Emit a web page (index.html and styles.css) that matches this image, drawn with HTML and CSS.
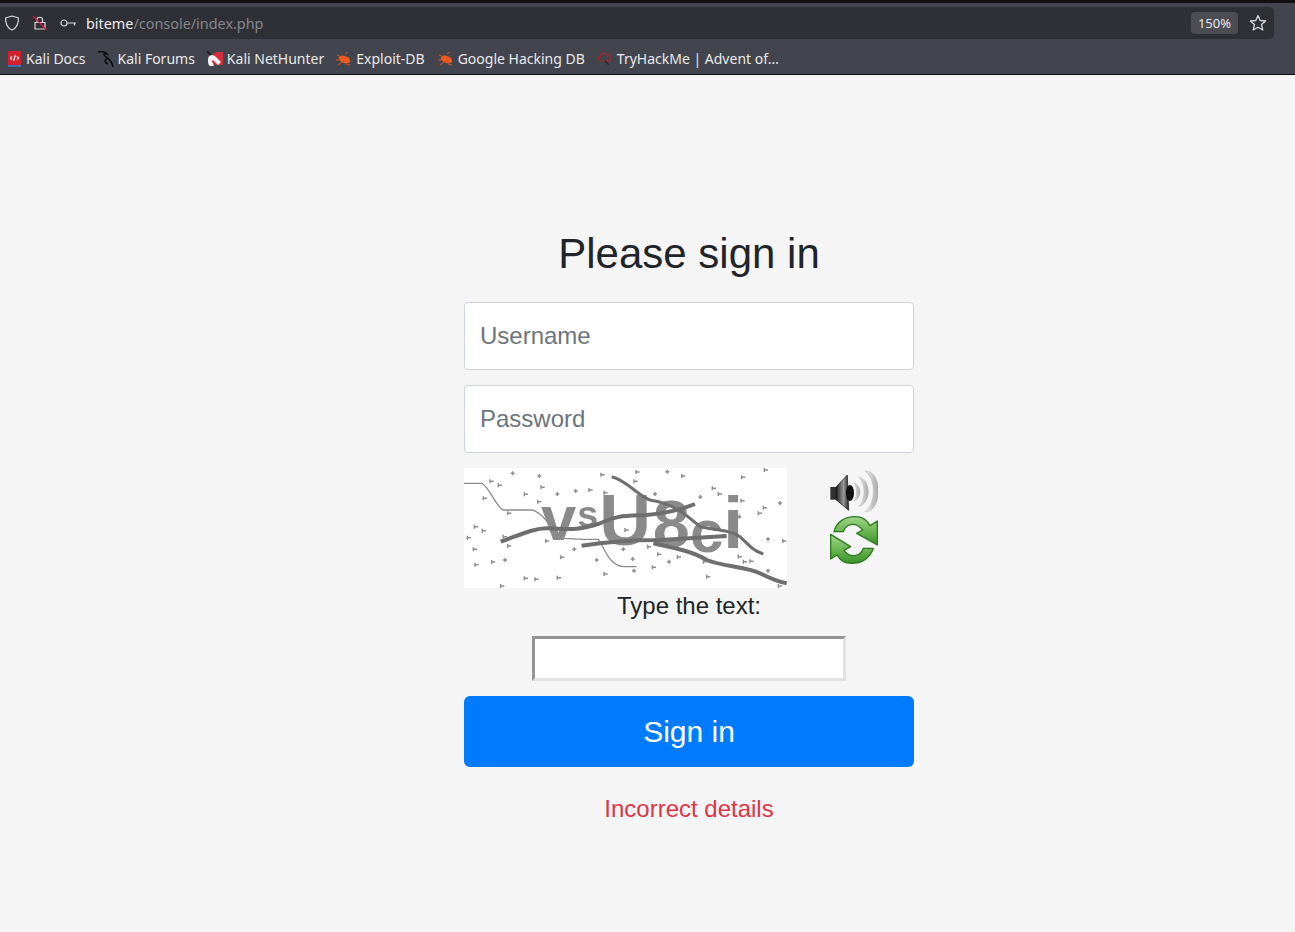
FILE: index.html
```html
<!DOCTYPE html>
<html lang="en">

<head>
    <meta charset="UTF-8">
    <meta name="viewport" content="width=device-width, initial-scale=1.0">
    <title>Sign in</title>
    <link rel="stylesheet" href="styles.css">
</head>

<body>
    <div class="browser">
        <div class="url-bar">
            <svg class="ui-icon" width="16" height="16" viewBox="0 0 16 16"><path d="M8 1 L14.5 3 C14.5 9 13 13 8 15 C3 13 1.500 9 1.500 3 Z" fill="none" stroke="#d8d8da" stroke-width="1.200" stroke-linejoin="round"/></svg>
            <svg class="ui-icon" width="16" height="16" viewBox="0 0 16 16"><path d="M5 7 V4.500 C5 1.500 10.500 1.500 10.500 4.500 V7 M3 7.500 H13 V14 H3 Z" fill="none" stroke="#d8d8da" stroke-width="1.200"/><path d="M1.500 1.500 L14.500 15" stroke="#e0174f" stroke-width="1.300"/></svg>
            <svg class="ui-icon" width="17" height="16" viewBox="0 0 17 16"><circle cx="4" cy="8" r="3" fill="none" stroke="#d8d8da" stroke-width="1.200"/><path d="M7 8 H16 M14.500 8 V10.500" fill="none" stroke="#d8d8da" stroke-width="1.200"/></svg>
            <div class="url"><span class="host">biteme</span>/console/index.php</div>
            <div class="zoom-level">150%</div>
            <svg class="star" width="18" height="18" viewBox="0 0 18 18"><path d="M9 1.500 L11.200 6.500 L16.700 7 L12.500 10.600 L13.800 16 L9 13.200 L4.200 16 L5.500 10.600 L1.300 7 L6.800 6.500 Z" fill="none" stroke="#d8d8da" stroke-width="1.300" stroke-linejoin="round"/></svg>
        </div>
        <div class="bookmarks">
            <div class="bookmark">
                <svg viewBox="0 0 16 16"><rect x="2" y="0" width="13" height="14" fill="#d3202a"/><rect x="2" y="14" width="13" height="2" fill="#3f6fb5"/><path d="M6 5 L4.500 7 L6 9 M11 5 L12.500 7 L11 9 M9.500 4 L7.500 10" fill="none" stroke="#fff" stroke-width="1.100"/></svg>
                Kali Docs
            </div>
            <div class="bookmark">
                <svg viewBox="0 0 16 16"><path d="M0 1 C4 0 7 1 9 3 C5 2 5 4 8 6 C12 8 14 11 15 16 M9 8 C6 9 7 12 10 13" fill="none" stroke="#0a0a0c" stroke-width="1.500"/></svg>
                Kali Forums
            </div>
            <div class="bookmark">
                <svg viewBox="0 0 16 16"><path d="M1 8 L9 1 H16 V14 H9 Z" fill="#d92e3a"/><path d="M1 9 C1 3 6 3 9 6 L14 11 L11 14 L7 10 C5 8 4 10 6 12 L7 15 H3 C1 14 1 11 1 9 Z" fill="#f2f2f2"/><path d="M0 0 L4 4" stroke="#111" stroke-width="1.500"/></svg>
                Kali NetHunter
            </div>
            <div class="bookmark exploit">
                <svg viewBox="0 0 16 16"><use href="#bug"/></svg>
                Exploit-DB
            </div>
            <div class="bookmark">
                <svg viewBox="0 0 16 16"><use href="#bug"/></svg>
                Google Hacking DB
            </div>
            <div class="bookmark">
                <svg viewBox="0 0 16 16"><path d="M3 9 C0 8 1 5 3.500 5 C4 2 8 1 9.500 4 C12 3 14 5 13 7 C15 8 14 10 13 10 H3" fill="none" stroke="#b3202a" stroke-width="1.100"/><path d="M8 10 L12 14" stroke="#2a2a2e" stroke-width="1.500"/></svg>
                TryHackMe | Advent of…
            </div>
        </div>
    </div>

    <svg class="defs" width="0" height="0">
        <defs>
            <g id="bug">
                <path d="M1 4 L6 6 M0 9 L5 9 M2 14 L6 11 M10 13 L14 14 M9 3 L12 1" stroke="#e8561c" stroke-width="0.900"/>
                <ellipse cx="8.500" cy="8.500" rx="6" ry="3.400" transform="rotate(22 8.500 8.500)" fill="#ee5a1a"/>
            </g>
            <path id="speck" d="M-5 -6 V6 M-5 0 H6"/>
            <path id="cross" d="M0 -6 V6 M-6 0 H6"/>
            <linearGradient id="cone" x1="0" y1="0" x2="1" y2="0">
                <stop offset="0" stop-color="#1c1c1c"/>
                <stop offset="0.600" stop-color="#9a9a9a"/>
                <stop offset="1" stop-color="#222"/>
            </linearGradient>
            <linearGradient id="wave" x1="0" y1="0" x2="1" y2="0">
                <stop offset="0" stop-color="#f0f0f0"/>
                <stop offset="1" stop-color="#a8a8a8"/>
            </linearGradient>
            <linearGradient id="green" x1="0" y1="0" x2="0" y2="1">
                <stop offset="0" stop-color="#a2d68a"/>
                <stop offset="0.600" stop-color="#62b04a"/>
                <stop offset="1" stop-color="#3a8f2a"/>
            </linearGradient>
        </defs>
    </svg>

    <main class="page">
        <form class="signin">
            <h1>Please sign in</h1>
            <input class="field" type="text" placeholder="Username">
            <input class="field" type="password" placeholder="Password">

            <div class="captcha-row">
                <svg class="captcha" width="323" height="120" viewBox="12 24 969 360">
                    <rect x="12" y="24" width="969" height="360" fill="#fff"/>
                    <g class="captcha-text">
                        <text x="243" y="240" font-size="190">v</text>
                        <text x="352" y="200" font-size="113">s</text>
                        <text x="418" y="255" font-size="215">U</text>
                        <text x="578" y="260" font-size="200">8</text>
                        <text x="690" y="275" font-size="180">c</text>
                        <text x="790" y="265" font-size="215">i</text>
                    </g>
                    <g class="captcha-lines">
                        <path class="thin" d="M12 70 H65 C85 75 110 145 130 150 H215 C245 155 270 200 310 235 L370 238 H415 C435 265 445 315 490 320 H530"/>
                        <path class="thick" d="M122 245 C180 225 220 205 260 205 C310 205 350 215 420 190 C470 165 500 168 560 165 C620 160 660 150 705 132"/>
                        <path class="mid" d="M455 50 C500 60 530 105 570 120 C640 130 680 165 720 200 C770 210 810 210 840 230 C870 260 885 275 910 282"/>
                        <path class="thick" d="M365 257 C440 245 520 240 600 240 L800 228"/>
                        <path class="thick" d="M580 250 C650 265 700 275 740 300 C790 320 860 320 900 340 C930 355 950 365 980 370"/>
                    </g>
                    <g class="specks">
                        <use href="#cross" x="158" y="40"/><use href="#cross" x="238" y="48"/><use href="#speck" x="428" y="44"/>
                        <use href="#speck" x="533" y="36"/><use href="#cross" x="622" y="35"/><use href="#speck" x="670" y="48"/>
                        <use href="#speck" x="850" y="52"/><use href="#speck" x="918" y="30"/><use href="#speck" x="95" y="64"/>
                        <use href="#speck" x="120" y="76"/><use href="#speck" x="248" y="82"/><use href="#speck" x="198" y="103"/>
                        <use href="#cross" x="292" y="102"/><use href="#cross" x="347" y="93"/><use href="#speck" x="392" y="90"/>
                        <use href="#speck" x="437" y="98"/><use href="#cross" x="585" y="102"/><use href="#speck" x="527" y="64"/>
                        <use href="#cross" x="721" y="111"/><use href="#speck" x="762" y="85"/><use href="#speck" x="780" y="102"/>
                        <use href="#speck" x="848" y="122"/><use href="#cross" x="960" y="129"/><use href="#speck" x="915" y="143"/>
                        <use href="#speck" x="900" y="160"/><use href="#cross" x="838" y="170"/><use href="#speck" x="75" y="115"/>
                        <use href="#speck" x="238" y="125"/><use href="#speck" x="148" y="160"/><use href="#speck" x="48" y="200"/>
                        <use href="#speck" x="72" y="212"/><use href="#speck" x="27" y="233"/><use href="#speck" x="135" y="230"/>
                        <use href="#speck" x="45" y="268"/><use href="#speck" x="148" y="258"/><use href="#speck" x="100" y="306"/>
                        <use href="#cross" x="135" y="300"/><use href="#speck" x="50" y="314"/><use href="#speck" x="307" y="292"/>
                        <use href="#cross" x="343" y="268"/><use href="#cross" x="410" y="300"/><use href="#cross" x="490" y="268"/>
                        <use href="#speck" x="500" y="210"/><use href="#cross" x="518" y="297"/><use href="#cross" x="522" y="332"/>
                        <use href="#speck" x="568" y="260"/><use href="#speck" x="598" y="283"/><use href="#cross" x="627" y="305"/>
                        <use href="#speck" x="657" y="291"/><use href="#speck" x="582" y="322"/><use href="#speck" x="735" y="305"/>
                        <use href="#speck" x="840" y="290"/><use href="#speck" x="855" y="305"/><use href="#speck" x="875" y="304"/>
                        <use href="#cross" x="924" y="237"/><use href="#speck" x="973" y="243"/><use href="#cross" x="924" y="332"/>
                        <use href="#speck" x="745" y="350"/><use href="#speck" x="437" y="342"/><use href="#speck" x="297" y="353"/>
                        <use href="#speck" x="230" y="358"/><use href="#speck" x="198" y="355"/><use href="#speck" x="127" y="378"/>
                        <use href="#speck" x="960" y="378"/><use href="#speck" x="262" y="243"/>
                    </g>
                </svg>
                <div class="captcha-tools">
                    <svg width="48" height="42" viewBox="30 15 144 126">
                        <path d="M135 18 C165 18 175 50 175 78 C175 105 165 140 135 140 C155 125 160 100 160 78 C160 55 155 35 135 18 Z" fill="url(#wave)" stroke="#b0b0b0" stroke-width="1.500"/>
                        <path d="M116 36 C135 40 145 60 145 80 C145 100 135 120 116 124 C128 112 132 96 132 80 C132 64 128 48 116 36 Z" fill="url(#wave)" stroke="#b0b0b0" stroke-width="1.500"/>
                        <path d="M102 54 C114 58 120 70 120 80 C120 92 114 104 102 108 C108 98 110 90 110 80 C110 70 108 62 102 54 Z" fill="url(#wave)" stroke="#b0b0b0" stroke-width="1.500"/>
                        <rect x="31" y="66" width="18" height="38" fill="#333"/>
                        <path d="M48 66 L82 30 L86 136 L48 104 Z" fill="url(#cone)" stroke="#111" stroke-width="2"/>
                        <ellipse cx="90" cy="84" rx="12" ry="24" fill="#111"/>
                    </svg>
                    <svg width="48" height="48" viewBox="30 153 144 144">
                        <path d="M42 200 C50 170 75 155 105 155 C125 155 140 162 150 182 L172 168 V240 L110 205 L128 195 C118 183 108 178 98 178 C85 178 75 185 70 200 Z" fill="url(#green)" stroke="#2c7a20" stroke-width="4" stroke-linejoin="round"/>
                        <path d="M160 250 C150 280 125 295 95 295 C75 295 60 288 52 270 L32 282 V208 L92 245 L72 256 C80 268 90 272 102 272 C115 272 125 265 130 250 Z" fill="url(#green)" stroke="#2c7a20" stroke-width="4" stroke-linejoin="round"/>
                    </svg>
                </div>
            </div>

            <label class="captcha-label" for="captchaCode">Type the text:</label>
            <input class="captcha-input" id="captchaCode" type="text">
            <button class="signin-btn" type="button">Sign in</button>
            <p class="error">Incorrect details</p>
        </form>
    </main>
</body>

</html>
```

FILE: styles.css
```css
body {
    font-family: "Liberation Sans", Arial, sans-serif;
    background-color: #f5f5f5;
    color: #212529;
    margin: 0;
    height: 932px;
    overflow: hidden;
}

.browser {
    height: 68px;
    padding-top: 3px;
    background-color: #42454d;
    border-top: 3px solid #101014;
    border-bottom: 1px solid #0c0c0e;
    box-sizing: content-box;
    font-family: "Noto Sans", sans-serif;
    font-size: 14px;
    color: #e9e9eb;
}

.url-bar {
    height: 32px;
    margin-right: 21px;
    margin-top: 1px;
    padding: 0 8px 0 4px;
    background-color: #2f3036;
    border-radius: 0 5px 5px 0;
    display: flex;
    align-items: center;
    box-sizing: border-box;
}

.ui-icon {
    margin-right: 12px;
    flex-shrink: 0;
}

.url {
    flex: 1;
    margin-left: -3px;
    font-size: 14.4px;
    color: #85868b;
}

.host {
    color: #ececee;
}

.zoom-level {
    padding: 3px 7px;
    background-color: #4c4d53;
    border-radius: 4px;
    font-size: 13px;
    line-height: 16px;
    margin-right: 11px;
}

.star {
    margin-right: -1px;
}

.bookmarks {
    height: 35px;
    padding: 4px 0 0 6px;
    box-sizing: border-box;
    display: flex;
    align-items: center;
    gap: 12px;
}

.bookmark {
    display: flex;
    align-items: center;
    gap: 4px;
    white-space: nowrap;
}

.bookmark.exploit {
    padding-right: 1px;
}

.bookmark svg {
    width: 16px;
    height: 16px;
    flex-shrink: 0;
}

.defs {
    position: absolute;
}

.page {
    display: flex;
    justify-content: center;
    padding-left: 83px;
}

.signin {
    width: 450px;
    padding-top: 154px;
    display: flex;
    flex-direction: column;
    align-items: center;
}

h1 {
    font-size: 42px;
    font-weight: 400;
    line-height: 50px;
    margin: 0 0 23px 0;
}

.field {
    width: 100%;
    height: 68px;
    padding: 0 15px;
    margin-bottom: 15px;
    box-sizing: border-box;
    background-color: #fff;
    border: 1px solid #ced4da;
    border-radius: 4px;
    font-family: inherit;
    font-size: 24px;
}

.field::placeholder {
    color: #6c757d;
}

.captcha-row {
    width: 100%;
    display: flex;
}

.captcha {
    display: block;
    filter: blur(0.4px);
}

.captcha-text {
    font-family: "Liberation Sans", sans-serif;
    font-weight: 700;
    fill: #8a8a8a;
}

.captcha-lines {
    fill: none;
    stroke: #6e6e6e;
    stroke-linejoin: round;
}

.captcha-lines .thin {
    stroke: #8c8c8c;
    stroke-width: 4;
}

.captcha-lines .mid {
    stroke-width: 9;
}

.captcha-lines .thick {
    stroke-width: 12;
}

.specks {
    fill: none;
    stroke: #8f8f8f;
    stroke-width: 4.5;
}

.captcha-tools {
    margin-left: 43px;
    padding-top: 2px;
    display: flex;
    flex-direction: column;
    gap: 4px;
}

.captcha-tools svg {
    display: block;
}

.captcha-label {
    font-size: 24px;
    line-height: 36px;
    margin-bottom: 12px;
}

.captcha-input {
    width: 314px;
    height: 45px;
    box-sizing: border-box;
    padding: 0 3px;
    margin-bottom: 15px;
    background-color: #fff;
    border-width: 3px;
    border-style: solid;
    border-color: #949494 #e2e2e2 #e2e2e2 #949494;
}

.signin-btn {
    width: 100%;
    height: 71px;
    background-color: #007bff;
    color: #fff;
    border: none;
    border-radius: 6px;
    font-family: inherit;
    font-size: 30px;
}

.error {
    margin: 24px 0 0 0;
    color: #dc3545;
    font-size: 24px;
    line-height: 36px;
}
```
